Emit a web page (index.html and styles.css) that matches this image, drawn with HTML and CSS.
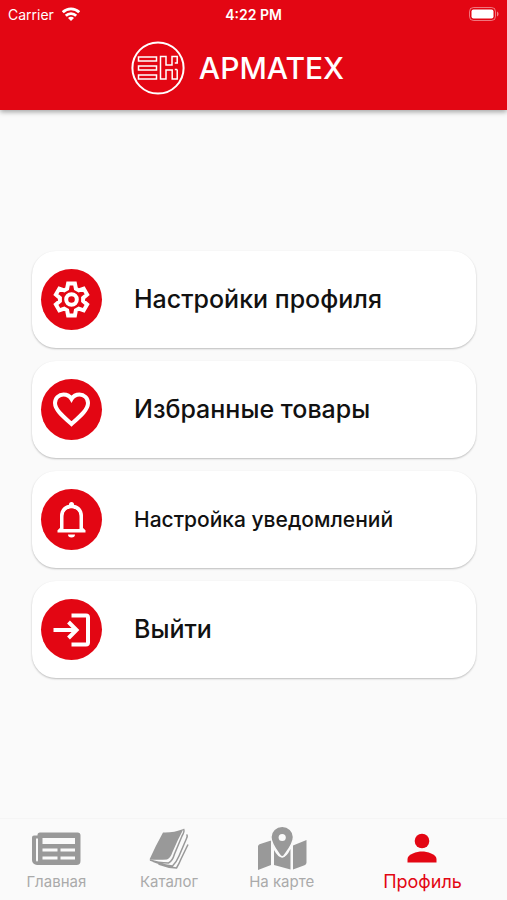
FILE: index.html
```html
<!DOCTYPE html>
<html lang="ru">
<head>
<meta charset="utf-8">
<meta name="viewport" content="width=device-width, initial-scale=1">
<title>Арматех</title>
<link rel="stylesheet" href="styles.css">
</head>
<body>
<header class="header">
  <div class="status">
    <div class="carrier">
      <span>Carrier</span>
      <svg width="18" height="14" viewBox="0 0 18 14" fill="none" stroke="#fff" stroke-width="2.8">
        <path d="M.8 5.200a11.600 11.600 0 0 1 16.400 0M3.800 8.800a7.400 7.400 0 0 1 10.400 0"/>
        <path d="M9 14 6 11a4.200 4.200 0 0 1 6 0z" fill="#fff" stroke="none"/>
      </svg>
    </div>
    <time class="clock">4:22 PM</time>
    <svg class="battery" width="30" height="14" viewBox="0 0 30 14">
      <rect x=".5" y=".5" width="26" height="13" rx="4" fill="none" stroke="#fff" stroke-opacity=".45"/>
      <rect x="2.5" y="2.5" width="22" height="9" rx="2" fill="#fff"/>
      <path d="M28 4.5c2 .8 2 4.2 0 5z" fill="#fff" fill-opacity=".5"/>
    </svg>
  </div>
  <div class="brand">
    <svg width="54" height="54" viewBox="0 0 54 54" fill="none" stroke="#fff">
      <circle cx="27" cy="27" r="25.600" stroke-width="2"/>
      <g stroke-width="1.500">
        <rect x="7.500" y="16" width="18" height="4"/>
        <rect x="7.500" y="25" width="18" height="4"/>
        <rect x="7.500" y="34" width="18" height="4"/>
        <path d="M46.200 28.500V38h-5V29H35v9h-5.500V15.500H35V24h6v-8.500h5.200V22h-2.400M46.200 28.500h-2.400"/>
      </g>
    </svg>
    <h1 class="title">АРМАТЕХ</h1>
  </div>
</header>

<main class="menu">
  <button class="card" type="button">
    <svg class="card-icon" viewBox="0 0 61 61">
      <g transform="translate(30.500 30.500)">
        <path d="M-3.400-16H3.400L4.400-10.800 7.300-9.100 12.200-10.900 15.600-5 11.600-1.600V1.600L15.600 5 12.200 10.900 7.300 9.100 4.400 10.800 3.400 16H-3.400L-4.400 10.800-7.300 9.100-12.200 10.900-15.600 5-11.600 1.600V-1.600L-15.600-5-12.200-10.900-7.300-9.100-4.400-10.800Z"/>
        <circle r="5.300"/>
      </g>
    </svg>
    <span>Настройки профиля</span>
  </button>
  <button class="card" type="button">
    <svg class="card-icon" viewBox="0 0 61 61">
      <path d="M30.500 45C21 36.500 14 30.500 14 24c0-5 4-8.500 8.500-8.500 3 0 6.200 1.500 8 4.500 1.800-3 5-4.500 8-4.500 4.500 0 8.500 3.500 8.500 8.500 0 6.500-7 12.500-16.500 21z"/>
    </svg>
    <span>Избранные товары</span>
  </button>
  <button class="card card-compact" type="button">
    <svg class="card-icon" viewBox="0 0 61 61">
      <path d="M21 42V27c0-6 4-9.500 9.500-9.500S40 21 40 27v15"/>
      <path class="solid" d="M16.500 43.500v-2.200l3.500-3.300h21l3.500 3.300v2.200zM27 45.500h7a3.500 3 0 0 1-7 0zM28 18v-2.500a2.500 2.500 0 0 1 5 0V18z"/>
      <path class="hole" d="M22.500 40V28c0-5 3-8.500 8-8.500s8 3.500 8 8.500v12z"/>
    </svg>
    <span>Настройка уведомлений</span>
  </button>
  <button class="card" type="button">
    <svg class="card-icon" viewBox="0 0 61 61">
      <path d="M30.500 16.500H45a2 2 0 0 1 2 2v25a2 2 0 0 1-2 2H30.500M12.500 31H36M27.500 23l8 8-8 8"/>
    </svg>
    <span>Выйти</span>
  </button>
</main>

<nav class="tabs">
  <a class="tab" href="#home">
    <svg width="50" height="44" viewBox="0 0 50 44">
      <path fill="#999" fill-rule="evenodd" d="M9 5.500h37.500a3 3 0 0 1 3 3V34a4 4 0 0 1-4 4H6a5 5 0 0 1-5-5V10.500a2 2 0 0 1 2-2h3.500V8A2.500 2.500 0 0 1 9 5.500zM11.500 11v6H44v-6zM11.500 21.500v3h15v-3zm18 0v3H44v-3zM11.500 29.500v3h15v-3zm18 0v3H44v-3zM5 11.500V33q0 1.500 1 1.500T7 33V11.500z"/>
    </svg>
    <span>Главная</span>
  </a>
  <a class="tab" href="#catalog">
    <svg width="50" height="44" viewBox="0 0 50 44">
      <path fill="#999" d="M19 5.500Q29 6 39.500 2 34 12 28.500 25q-2 6-5.500 7.500-8.500.5-17.500 0Q12 18 19 5.500z"/>
      <path fill="none" stroke="#999" stroke-width="1.500" d="M39.500 2Q41 4 38 9L30.500 27q-2 7-6 9Q14 36 6 33M42.500 7.500q1.500 1 0 4L35 29q-2.500 6-6.500 10-11-1-20-5M44 17.500 37 32q-2 5-4.500 9-9-.5-18-4"/>
    </svg>
    <span>Каталог</span>
  </a>
  <a class="tab" href="#map">
    <svg width="50" height="44" viewBox="0 0 50 44" fill="#999">
      <path d="M1 19.500Q1 18 2.500 17.300L14 13.500v24.500L1 43zM36 18.500 49.500 13v22.500q0 2-2 2.700L36 42.500z"/>
      <path d="M17 23q4 7.500 8.200 7.500T33.500 22v20.500L17 38z"/>
      <path stroke="#fafafa" stroke-width="1.500" d="M25.200-.7C31.500-.7 36.500 4 36.500 10c0 7-6 14-9.200 18.500q-2.100 2.500-4.200 0C20 24 13.900 17 13.900 10c0-6 5-10.700 11.300-10.700z"/>
      <circle cx="25.200" cy="10.500" r="3.600" fill="#fafafa"/>
    </svg>
    <span>На карте</span>
  </a>
  <a class="tab tab-active" href="#profile" aria-current="page">
    <svg width="50" height="44" viewBox="0 0 50 44" fill="#e30613">
      <circle cx="25" cy="14" r="7.300"/>
      <path d="M10.500 35.500V32c0-5 9.500-7.500 14.500-7.500s14.500 2.500 14.500 7.500v3.500z"/>
    </svg>
    <span>Профиль</span>
  </a>
</nav>
</body>
</html>
```

FILE: styles.css
```css
* {
  box-sizing: border-box;
}

body {
  margin: 0;
  min-height: 100vh;
  display: flex;
  flex-direction: column;
  background: #fafafa;
  color: #111;
  font-family: Inter, "Liberation Sans", sans-serif;
}

.header {
  height: 110px;
  padding: 4px 8px 0;
  background: #e30613;
  color: #fff;
  box-shadow: 0 2px 5px rgba(0, 0, 0, 0.35);
}

.status {
  display: grid;
  grid-template-columns: 1fr auto 1fr;
  align-items: center;
  height: 20px;
  font-size: 14px;
}

.carrier {
  display: flex;
  align-items: center;
  gap: 8px;
}

.clock {
  font-weight: 600;
}

.battery {
  justify-self: end;
}

.brand {
  display: flex;
  align-items: center;
  justify-content: center;
  gap: 14px;
  padding: 16px 32px 0 0;
}

.title {
  margin: 0;
  font-size: 30px;
  font-weight: 500;
  line-height: 56px;
}

.menu {
  flex: 1;
  display: flex;
  flex-direction: column;
  justify-content: center;
  gap: 13px;
  padding: 0 31px 0 32px;
}

.card {
  display: flex;
  align-items: center;
  gap: 32px;
  height: 97px;
  padding: 0 9px;
  border: 0;
  border-radius: 24px;
  background: #fff;
  box-shadow: 0 1px 2px rgba(0, 0, 0, 0.25);
  color: #111;
  font: 500 25px/31px Inter, "Liberation Sans", sans-serif;
  text-align: left;
  cursor: pointer;
}

.card-compact {
  font-size: 21px;
}

.card-icon {
  flex: none;
  width: 61px;
  height: 61px;
  border-radius: 50%;
  background: #e30613;
  fill: none;
  stroke: #fff;
  stroke-width: 4;
}

.card-icon .solid {
  fill: #fff;
  stroke: none;
}

.card-icon .hole {
  fill: #e30613;
  stroke: none;
}

.tabs {
  display: grid;
  grid-template-columns: 2fr 2fr 2fr 3fr;
  height: 82px;
  padding-top: 8px;
  border-top: 1px solid #f5f5f5;
}

.tab {
  display: flex;
  flex-direction: column;
  align-items: center;
  color: #aaa;
  font-size: 15px;
  line-height: 22px;
  text-decoration: none;
}

.tab-active {
  color: #e30613;
  font-size: 18px;
}
```
